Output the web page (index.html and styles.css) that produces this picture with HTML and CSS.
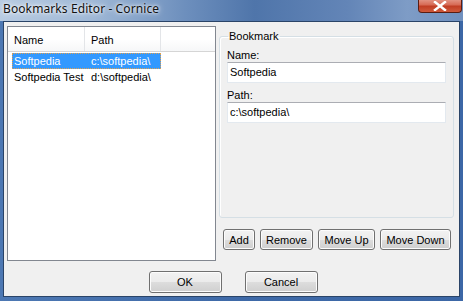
FILE: index.html
```html
<!DOCTYPE html>
<html>
<head>
<meta charset="utf-8">
<link rel="stylesheet" href="styles.css">
</head>
<body>
<div class="window">
  <div class="titlebar">
    <span class="title">Bookmarks Editor - Cornice</span>
    <div class="close">
      <svg width="14" height="10" viewBox="0 0 14 10"><path d="M2 1 L12 9 M12 1 L2 9" stroke="#fff" stroke-width="2.4" stroke-linecap="square"/></svg>
    </div>
  </div>
  <div class="client">
    <div class="main">
      <div class="listview">
        <div class="header">
          <div class="col c-name">Name</div>
          <div class="col c-path">Path</div>
          <div class="col c-rest"></div>
        </div>
        <div class="row selected"><span class="c-name">Softpedia</span><span class="c-path">c:\softpedia\</span></div>
        <div class="row"><span class="c-name">Softpedia Test</span><span class="c-path">d:\softpedia\</span></div>
      </div>
      <div class="side">
        <fieldset class="group">
          <legend>Bookmark</legend>
          <label class="lbl">Name:</label>
          <div class="input">Softpedia</div>
          <label class="lbl">Path:</label>
          <div class="input">c:\softpedia\</div>
        </fieldset>
        <div class="actions">
          <button class="btn b-add">Add</button>
          <button class="btn b-remove">Remove</button>
          <button class="btn b-up">Move Up</button>
          <button class="btn b-down">Move Down</button>
        </div>
      </div>
    </div>
    <div class="footer">
      <button class="btn big">OK</button>
      <button class="btn big">Cancel</button>
    </div>
  </div>
</div>
</body>
</html>
```
FILE: styles.css
```css
* { box-sizing: border-box; }
html, body { margin: 0; padding: 0; }
body { width: 463px; height: 301px; overflow: hidden; font-family: "Liberation Sans", Arial, sans-serif; font-size: 11px; color: #000; }
.window {
  width: 463px; height: 301px;
  display: flex; flex-direction: column;
  padding: 0 3px 4px 3px;
  background: linear-gradient(90deg, #4d78b3 0%, #3f6aa8 50%, #3c67a6 100%);
}
.titlebar {
  height: 21px; flex: none; margin: 0 -3px; padding: 0 1px 0 3px;
  display: flex; justify-content: space-between; align-items: flex-start;
  background: linear-gradient(90deg, #b8cbe1 0%, #9fb8d6 20%, #6d8fbd 40%, #4f75aa 55%, #6385b7 75%, #7e9cc6 88%, #6f90bf 100%);
}
.title { font-family: "Noto Sans", "Open Sans", sans-serif; font-size: 12px; line-height: 16px; padding-top: 1px; color: #111; text-shadow: 0 0 6px #fff, 0 0 3px #fff; letter-spacing: 0.1px; }
.close {
  width: 44px; height: 14px; margin-top: -1px;
  display: flex; align-items: center; justify-content: center;
  border: 1px solid #5a1d12; border-top: none; border-radius: 0 0 4px 4px;
  background: linear-gradient(180deg, #e4998a 0%, #d76a55 45%, #c13d24 55%, #cf5a3c 100%);
}
.client {
  flex: 1; min-height: 0;
  background: #f0f0f0;
  border: 1px solid #2a4468;
  display: flex; flex-direction: column;
  padding: 4px 0 0 3px;
}
.main { display: flex; height: 235px; flex: none; }
.listview {
  width: 209px; height: 235px;
  background: #fff; border: 1px solid #828790;
}
.header { display: flex; height: 25px; border-bottom: 1px solid #d5d5d5; background: linear-gradient(#fff 0%, #fff 50%, #f6f7f8 100%); }
.header .col { line-height: 26px; border-right: 1px solid #e3e5e8; padding-left: 6px; }
.header .c-name { width: 77px; }
.header .c-path { width: 76px; }
.header .c-rest { flex: 1; border-right: none; }
.row { display: flex; height: 16px; line-height: 16px; margin-left: 4px; width: 149px; margin-top: 1px; }
.row + .row { margin-top: 0; }
.row .c-name { width: 75px; padding-left: 2px; white-space: nowrap; }
.row .c-path { padding-left: 4px; white-space: nowrap; }
.row.selected { background: #3399ff; color: #fff; outline: 1px dotted #e0a050; outline-offset: -1px; }
.side { margin-left: 3px; width: 236px; display: flex; flex-direction: column; }
.group {
  margin: 4px 0 0 0; padding: 0 7px 0 7px; height: 188px; width: 235px;
  border: 1px solid #d5dfe5; border-radius: 3px;
  box-shadow: inset 1px 1px 0 #fff;
}
.group legend { padding: 0 1px 0 1px; margin-left: 1px; line-height: 12px; }
.lbl { display: block; margin-top: 7px; line-height: 13px; }
.input {
  width: 219px; height: 21px; margin-top: 0;
  background: #fff; border: 1px solid #e3e9ef; border-top-color: #abadb3;
  padding-left: 2px; line-height: 18px;
}
.input + .lbl { margin-top: 6px; }
.actions { display: flex; gap: 5px; margin-top: 11px; padding-left: 4px; }
.btn {
  font-family: "Liberation Sans", Arial, sans-serif; font-size: 11px; color: #000;
  height: 21px; padding: 0; margin: 0;
  border: 1px solid #707070; border-radius: 3px;
  background: linear-gradient(180deg, #f2f2f2 0%, #ebebeb 50%, #dddddd 51%, #cfcfcf 100%);
  box-shadow: inset 0 0 0 1px #fcfcfc;
}
.b-add { width: 32px; }
.b-remove { width: 53px; }
.b-up { width: 57px; }
.b-down { width: 71px; }
.footer { display: flex; justify-content: center; gap: 23px; margin-top: 10px; flex: none; }
.btn.big { width: 73px; height: 22px; }
```
